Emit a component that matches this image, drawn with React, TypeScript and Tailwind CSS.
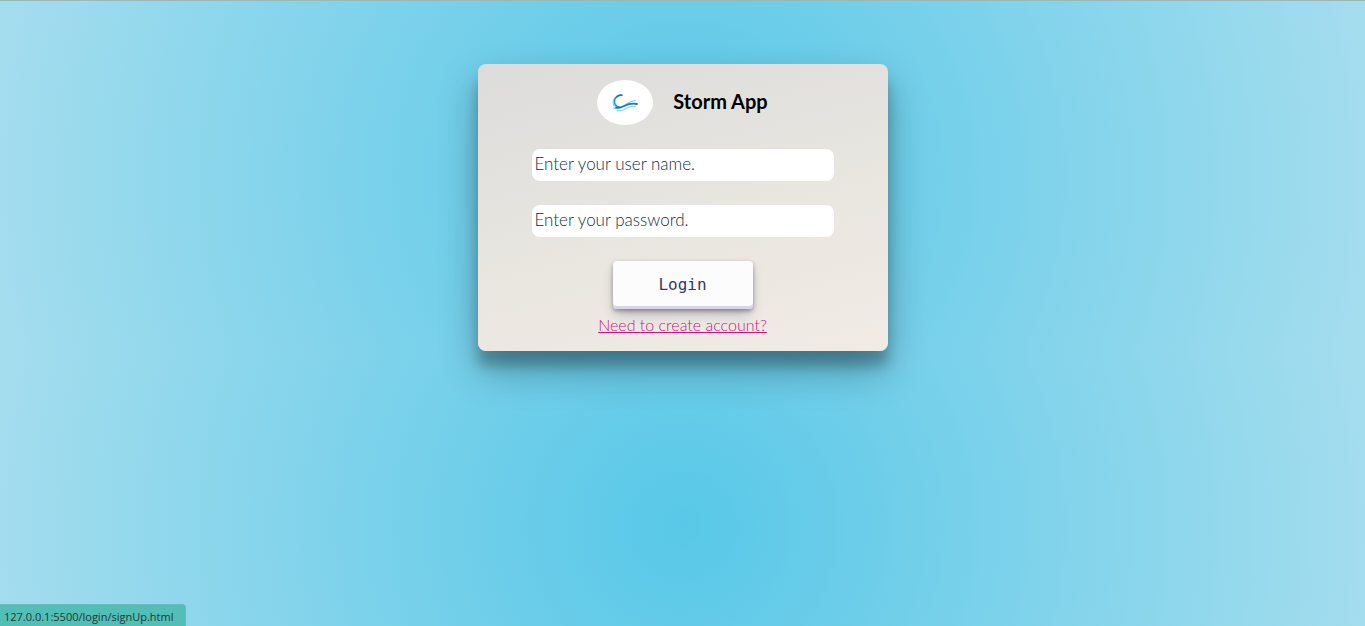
import React from 'react';

function StormLogo() {
  return (
    <span className="flex h-[45px] w-14 items-center justify-center rounded-[50%] bg-white">
      <svg viewBox="0 0 26 18" className="h-[18px] w-[26px]" fill="none" strokeLinecap="round" aria-hidden="true">
        <path d="M6 2C1 4 0 9 2.500 12" stroke="#8dd3f0" strokeWidth="1.200" />
        <path d="M9.500 1.200C5 .8 1.800 5 2.500 8.500C3 11 4.500 12.500 7 13" stroke="#3398d2" strokeWidth="1.600" />
        <path d="M5 2.800C6 1.600 8 .9 10 1.200" stroke="#1769b5" strokeWidth="1.400" />
        <path d="M1.500 14C8 16.500 12 11 16 9C19 7.500 21 7 23.500 6.500" stroke="#7ccbe9" strokeWidth="1.100" />
        <path d="M5 16.500C11 18 13 14.500 17 13C20 12 22 12 23.500 12.500" stroke="#7fd8ee" strokeWidth="1.100" />
        <path d="M4 13.500C11 15.500 14 7.500 25 10" stroke="#1f74bd" strokeWidth="1.800" />
      </svg>
    </span>
  );
}

const field =
  'h-8 w-full rounded-lg bg-white px-[3px] pb-[3px] text-[17px] font-light text-[#1f3d48] outline-none placeholder:text-[#123040] placeholder:opacity-100';

export default function App() {
  return (
    <div className="flex min-h-screen flex-col items-center border-t border-[#9ab8b8] bg-[radial-gradient(circle,#58c8e8,#a5ddee)] bg-[length:100%_350px] px-4 pt-[63px] font-['Lato',sans-serif]">
      <main className="w-full max-w-[410px] rounded-lg bg-[linear-gradient(165deg,#dcdcdc_0%,#eae7e0_60%,#f1ebe4_100%)] px-[54px] pt-4 pb-3 shadow-[0_19px_38px_rgba(0,0,0,0.3),0_15px_12px_rgba(0,0,0,0.22)]">
        <form className="flex flex-col items-center" onSubmit={(e) => e.preventDefault()}>
          <header className="mb-6 flex items-center gap-5">
            <StormLogo />
            <h1 className="pb-1 text-xl font-bold text-black">Storm App</h1>
          </header>
          <input className={field} type="text" aria-label="User name" placeholder="Enter your user name." />
          <input className={field + ' mt-6'} type="password" aria-label="Password" placeholder="Enter your password." />
          <button
            type="submit"
            className="mt-6 h-12 w-[140px] rounded bg-[#fcfcfd] font-['DejaVu_Sans_Mono',monospace] text-base text-[#36395a] shadow-[0_2px_4px_rgba(45,35,66,0.4),0_7px_13px_-3px_rgba(45,35,66,0.3),inset_0_-3px_0_#d6d6e7]"
          >
            Login
          </button>
          <a href="#signup" className="mt-1 text-base leading-6 font-light text-[#c71585] underline decoration-1 mb-[2px]">
            Need to create account?
          </a>
        </form>
      </main>
      <div className="fixed bottom-0 left-0 rounded-tr border-t border-r border-[#69b9c4] bg-[#52bfb7] pt-[2px] pr-3 pl-1 font-['Open_Sans',sans-serif] text-[11px] leading-[19px] text-[#203638]">
        127.0.0.1:5500/login/signUp.html
      </div>
    </div>
  );
}
